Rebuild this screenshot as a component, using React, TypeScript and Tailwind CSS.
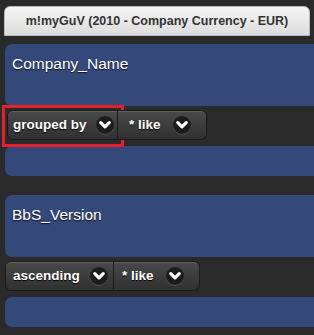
import React from "react";

const font = { fontFamily: '"Liberation Sans", Arial, Helvetica, sans-serif' };

function Chevron() {
  return (
    <span className="flex h-[18px] w-[18px] shrink-0 items-center justify-center rounded-full bg-[#1c1c1c] shadow-[0_1px_0_rgba(255,255,255,0.15)]">
      <svg width="12" height="10" viewBox="0 0 12 10">
        <path d="M1.8 2.6 L6 6.8 L10.2 2.6" fill="none" stroke="#fff" strokeWidth="3.2" strokeLinecap="round" strokeLinejoin="round" />
      </svg>
    </span>
  );
}

function Btn({ label, w, pl, chev, left, highlighted }: { label: string; w: number; pl: number; chev: number; left?: boolean; highlighted?: boolean }) {
  return (
    <div
      className={`relative flex h-[30px] items-center border border-[#1a1a1a] bg-gradient-to-b from-[#4a4a4a] to-[#303030] text-[13.5px] font-bold text-white [text-shadow:0_1px_1px_#000] shadow-[inset_0_1px_0_rgba(255,255,255,0.12)] ${
        left ? "rounded-l-[6px]" : "rounded-r-[6px] border-l-0"
      }`}
      style={{ width: w, paddingLeft: pl }}
    >
      <span className="whitespace-nowrap">{label}</span>
      <span className="absolute top-[5px]" style={{ left: chev }}>
        <Chevron />
      </span>
      {highlighted && (
        <div className="pointer-events-none absolute -left-[6px] -top-[6px] h-[42px] w-[122px] border-[3px] border-[#e3202b]" />
      )}
    </div>
  );
}

function Field({ name, first, w1, pl1, c1, w2, pl2, c2, hl, ml }: { name: string; first: string; w1: number; pl1: number; c1: number; w2: number; pl2: number; c2: number; hl?: boolean; ml: number }) {
  return (
    <div className="flex flex-col">
      <div className="h-[62px] rounded-l-[7px] bg-[#34487a] pl-[7px] pt-[8px] text-[15.5px] text-white [text-shadow:0_1px_1px_#111]">
        {name}
      </div>
      <div className="mt-[4px] flex" style={{ marginLeft: ml }}>
        <Btn label={first} w={w1} pl={pl1} chev={c1} left highlighted={hl} />
        <Btn label="* like" w={w2} pl={pl2} chev={c2} />
      </div>
      <div className="mt-[6px] h-[30px] rounded-l-[7px] bg-[#34487a]" />
    </div>
  );
}

export default function App() {
  return (
    <div className="h-[335px] w-[314px] overflow-hidden bg-[#2a2a2a] pt-[6px]" style={font}>
      <div className="ml-[4px] flex h-[30px] w-[306px] items-center justify-center rounded-t-[6px] border border-[#bbb] bg-gradient-to-b from-[#f6f6f6] to-[#dcdcdc] text-[12.5px] font-bold text-[#333]">
        m!myGuV (2010 - Company Currency - EUR)
      </div>
      <div className="ml-[5px] mt-[8px] flex flex-col gap-[19px]">
        <Field name="Company_Name" first="grouped by" w1={111} pl1={5} c1={88} w2={89} pl2={11} c2={55} hl ml={2} />
        <Field name="BbS_Version" first="ascending" w1={109} pl1={7} c1={84} w2={86} pl2={8} c2={52} ml={0} />
      </div>
    </div>
  );
}
